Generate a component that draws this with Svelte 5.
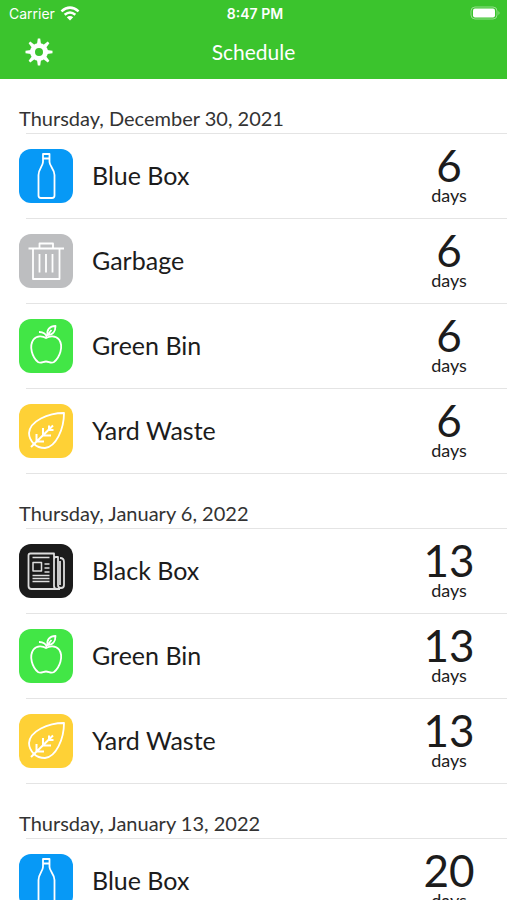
<script lang="ts">
  type Kind = 'blue' | 'garbage' | 'green' | 'yard' | 'black'

  interface Pickup {
    kind: Kind
    days: number
  }

  interface Day {
    date: string
    pickups: Pickup[]
  }

  const names: Record<Kind, string> = {
    blue: 'Blue Box',
    garbage: 'Garbage',
    green: 'Green Bin',
    yard: 'Yard Waste',
    black: 'Black Box'
  }

  const schedule: Day[] = [
    {
      date: 'Thursday, December 30, 2021',
      pickups: [
        { kind: 'blue', days: 6 },
        { kind: 'garbage', days: 6 },
        { kind: 'green', days: 6 },
        { kind: 'yard', days: 6 }
      ]
    },
    {
      date: 'Thursday, January 6, 2022',
      pickups: [
        { kind: 'black', days: 13 },
        { kind: 'green', days: 13 },
        { kind: 'yard', days: 13 }
      ]
    },
    {
      date: 'Thursday, January 13, 2022',
      pickups: [{ kind: 'blue', days: 20 }]
    }
  ]
</script>

{#snippet icon(kind: Kind)}
  <svg class="icon {kind}" viewBox="0 0 54 54" aria-hidden="true">
    {#if kind === 'blue'}
      <path d="M24 5h6.500v8c0 4 5 7 5 13v20.500q0 2.500-2.500 2.500H22q-2.500 0-2.500-2.500V26c0-6 4.500-9 4.500-13zM24 9.500h6.500" />
    {:else if kind === 'garbage'}
      <path d="M9.500 14.500h35.500M20.500 14V9.500h13.500V14M14 15v30h26.500V15M20.500 20v18.500M27 20v18.500M33.500 20v18.500" />
    {:else if kind === 'green'}
      <path d="M27 19c-3-2-9-3-12.500 1.500-5 7-1 18 4.500 22.500 3 2 5-.5 8-.5s5 2.500 8 .5c5.500-4.500 10-15.500 5-22.500-3.500-4.500-10-3.500-13-1.500z" />
      <path d="M27.500 18c0-2.500-3-5-7.500-5M28.500 16c-1-5 2-9 8-9 0 5-2.500 9-8 9zM28.500 16l4-5" />
    {:else if kind === 'yard'}
      <path d="M45 9C29 9 11 17 10 29c0 5 2 8 5 11 3 3 7 4 11 4C37 43 45 25 45 9z" />
      <path class="vein" d="M12 43l22-21.500M17.500 37.500v-7.500M17.500 37.500h7.500M24 31.500v-7.500M24 31.500h8M30 26v-4.500M30 26h4.500" />
    {:else}
      <path d="M35 13V9.500H11.500q-2 0-2 2V42q0 3 3 3H41M35 13v29q0 3 3 3M35 15q0-2 2-2h2v28q0 3 3 3t3-3V18q0-4-4-4M41 17v24" />
      <path class="thin" d="M13.500 13.500h17M14 18.500h8.500v8.500H14zM25.500 20h5M25.500 24h5M25.500 28h5M13.500 31.500h17M13.500 34.500h17M13.500 37.500h17" />
    {/if}
  </svg>
{/snippet}

<div class="screen">
  <header>
    <div class="status">
      <div class="carrier">
        <span>Carrier</span>
        <svg width="20" height="15" viewBox="0 0 18 14" aria-hidden="true">
          <path d="M1 5Q9-2 17 5M4 8.200Q9 4 14 8.200" fill="none" stroke="#fff" stroke-width="2.400" />
          <path d="M6 10.500Q9 8.300 12 10.500L9 13.500z" fill="#fff" />
        </svg>
      </div>
      <span class="time">8:47 PM</span>
      <svg class="battery" width="31" height="14" viewBox="0 0 31 14" aria-hidden="true">
        <rect x="1" y="1" width="26" height="12" rx="4" fill="none" stroke="#fff" stroke-opacity="0.450" />
        <rect x="3" y="2.500" width="22" height="9" rx="2" fill="#fff" />
        <path d="M28.500 5q2 2 0 4z" fill="#fff" fill-opacity="0.500" />
      </svg>
    </div>
    <div class="nav">
      <button type="button" aria-label="Settings">
        <svg width="28" height="28" viewBox="-14 -14 28 28" aria-hidden="true">
          <circle r="6.500" fill="none" stroke="#fff" stroke-width="5" />
          {#each [0, 45, 90, 135, 180, 225, 270, 315] as angle}
            <path d="M-2-8h4L1.200-13.500h-2.400z" fill="#fff" transform="rotate({angle})" />
          {/each}
        </svg>
      </button>
      <h1>Schedule</h1>
    </div>
  </header>

  <main>
    {#each schedule as day}
      <section>
        <h2>{day.date}</h2>
        <ul>
          {#each day.pickups as pickup}
            <li>
              {@render icon(pickup.kind)}
              <span class="name">{names[pickup.kind]}</span>
              <div class="countdown">
                <span class="number">{pickup.days}</span>
                <span class="unit">days</span>
              </div>
            </li>
          {/each}
        </ul>
      </section>
    {/each}
  </main>
</div>

<style>
  :global(body) {
    margin: 0;
    background: #fff;
  }

  .screen {
    display: flex;
    flex-direction: column;
    height: 100vh;
    font-family: Avenir, Lato, sans-serif;
    color: #1c1c1c;
  }

  header {
    flex-shrink: 0;
    background: #3bc42d;
    color: #fff;
  }

  .status,
  .nav {
    display: grid;
    grid-template-columns: 1fr auto 1fr;
    align-items: center;
  }

  .status {
    height: 26px;
    padding: 0 6px 0 9px;
    font-family: Inter, sans-serif;
    font-size: 14px;
  }

  .carrier {
    display: flex;
    align-items: center;
    gap: 5px;
  }

  .time {
    font-weight: 600;
  }

  .battery {
    justify-self: end;
  }

  .nav {
    height: 51px;
    padding: 0 25px 2px;
  }

  button {
    justify-self: start;
    display: flex;
    padding: 0;
    border: 0;
    background: none;
    cursor: pointer;
  }

  h1 {
    margin: 0;
    padding-bottom: 1px;
    font-size: 21px;
    font-weight: 400;
  }

  main {
    flex: 1;
    overflow-y: auto;
    scrollbar-width: none;
  }

  h2 {
    box-sizing: border-box;
    height: 54px;
    margin: 0;
    padding: 27px 19px 0;
    font-size: 20px;
    line-height: 24px;
    font-weight: 400;
    color: #333;
  }

  ul {
    margin: 0 0 0 26px;
    padding: 0;
    list-style: none;
    border-top: 1px solid #e4e4e4;
  }

  li {
    display: flex;
    align-items: center;
    height: 84px;
    padding-right: 18px;
    border-bottom: 1px solid #e4e4e4;
  }

  .icon {
    flex-shrink: 0;
    width: 54px;
    height: 54px;
    margin-left: -7px;
    border-radius: 12px;
    fill: none;
    stroke: #fff;
    stroke-width: 1.800;
    stroke-linejoin: round;
  }

  .icon .thin {
    stroke-width: 1.500;
  }

  .icon .vein {
    stroke-width: 2;
  }

  .blue {
    background: #0799f6;
  }

  .garbage {
    background: #bdbec0;
  }

  .green {
    background: #42e646;
  }

  .yard {
    background: #fed136;
  }

  .black {
    background: #1b1b1b;
    stroke: #ddd;
  }

  .name {
    flex: 1;
    padding: 0 0 3px 19px;
    font-size: 25px;
  }

  .countdown {
    display: flex;
    flex-direction: column;
    align-items: center;
    width: 80px;
  }

  .number {
    font-size: 44px;
    line-height: 38px;
  }

  .unit {
    font-size: 18px;
    line-height: 22px;
  }
</style>
